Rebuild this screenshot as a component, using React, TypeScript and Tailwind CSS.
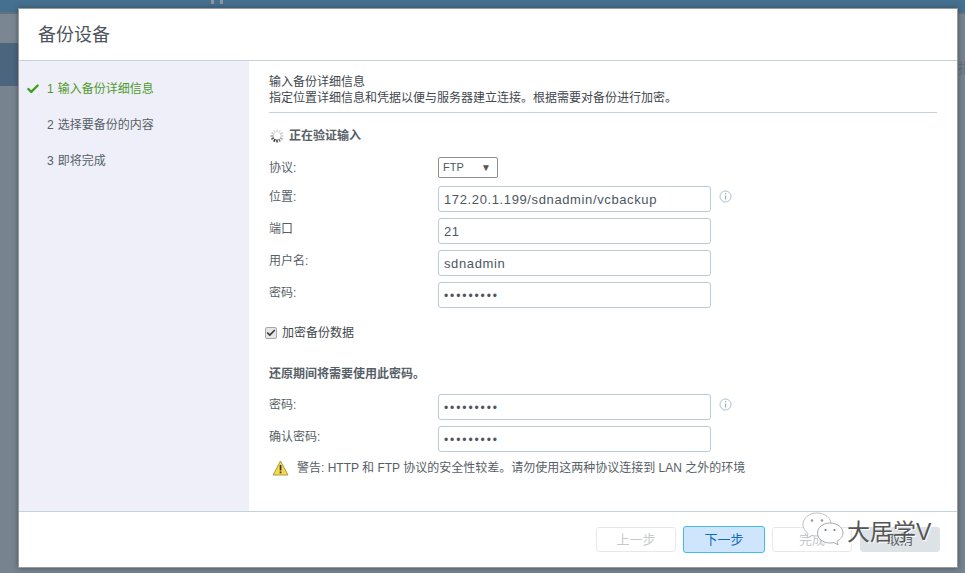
import { Check } from "lucide-react";

const font = { fontFamily: '"Liberation Sans", "Noto Sans CJK SC", sans-serif' };

function Info() {
  return (
    <svg width="13" height="13" viewBox="0 0 13 13" className="ml-[8px] mt-[-6px] shrink-0">
      <circle cx="6.5" cy="6.5" r="5.5" fill="none" stroke="#a9bfd0" />
      <rect x="6" y="5.5" width="1.2" height="4" fill="#9fb3c4" />
      <rect x="6" y="3.2" width="1.2" height="1.2" fill="#9fb3c4" />
    </svg>
  );
}

function Spinner() {
  const ticks = [0, 30, 60, 90, 120, 150, 180, 210, 240, 270, 300, 330];
  const colors = ["#ddd", "#ddd", "#ccc", "#ccc", "#aaa", "#777", "#333", "#222", "#555", "#999", "#ccc", "#ddd"];
  return (
    <svg width="16" height="16" viewBox="0 0 16 16" className="shrink-0">
      {ticks.map((a, i) => (
        <line
          key={a}
          x1="8"
          y1="1.500"
          x2="8"
          y2="4.500"
          stroke={colors[i]}
          strokeWidth="1.500"
          transform={`rotate(${a} 8 8)`}
        />
      ))}
    </svg>
  );
}

function Row({
  label,
  value,
  info,
  dots,
}: {
  label: string;
  value: string;
  info?: boolean;
  dots?: boolean;
}) {
  return (
    <div className="flex h-[32px] items-start">
      <div className="w-[169px] pt-[3px] text-[12px] leading-[16px] text-[#565e66]">{label}</div>
      <div
        className={`flex h-[26px] w-[273px] items-center rounded-[3px] border border-[#b9cbd9] bg-white pl-[5px] pt-[1px] text-[#4c5660] ${
          dots ? "text-[12px] tracking-[1.900px]" : "text-[13px] tracking-[0.620px]"
        }`}
      >
        {value}
      </div>
      {info && (
        <div className="flex h-[26px] items-center">
          <Info />
        </div>
      )}
    </div>
  );
}

function Step({ n, text, done }: { n: number; text: string; done?: boolean }) {
  return (
    <div
      className={`flex h-[36px] items-center text-[12px] ${done ? "text-[#4f9a2c]" : "text-[#565e66]"}`}
    >
      <div className="flex w-[28px] justify-end pr-[7px]">
        {done && <Check size={14} strokeWidth={4} className="text-[#3f9e1e]" />}
      </div>
      <span className="mr-[4px]">{n}</span>
      <span>{text}</span>
    </div>
  );
}

function FooterButton({ children, variant }: { children: string; variant: "off" | "primary" | "gray" }) {
  const cls =
    variant === "primary"
      ? "w-[82px] h-[27px] border-[#3fbdf2] bg-[#cfe5fb] text-[#0f6cb8]"
      : variant === "gray"
        ? "w-[80px] h-[25px] border-[#dde2e7] bg-[#dde2e7] text-[#565e66]"
        : "w-[80px] h-[25px] border-[#e6e9ec] bg-white text-[#c6cacd]";
  return (
    <div className={`flex items-center justify-center rounded-[3px] border text-[13px] ${cls}`}>
      {children}
    </div>
  );
}

function WeChatMark() {
  return (
    <svg width="42" height="34" viewBox="0 0 42 34" className="shrink-0">
      <path
        d="M15 1C7 1 1 6 1 12.500c0 3.700 2 6.800 5 8.900L5 26l5-2.700c1.500.4 3 .7 5 .7 8 0 14-5 14-11.500S23 1 15 1z"
        fill="#fff"
        stroke="#bfc2c5"
      />
      <circle cx="10" cy="8.500" r="1.300" fill="#9a9a9a" />
      <circle cx="20" cy="8.500" r="1.300" fill="#9a9a9a" />
      <path
        d="M28 11c-7 0-12.500 4.300-12.500 10S21 31 28 31c1.300 0 2.600-.2 3.800-.5L36 33l-1-3.800c3.600-1.900 6-4.800 6-8.200 0-5.700-6-10-13-10z"
        fill="#fff"
        stroke="#a8abae"
      />
      <circle cx="23.500" cy="18" r="1.100" fill="#777" />
      <circle cx="32.500" cy="18" r="1.100" fill="#777" />
    </svg>
  );
}

export default function App() {
  return (
    <div className="relative h-[573px] w-[965px] overflow-hidden bg-[#77838f]" style={font}>
      {/* page behind the dialog */}
      <div className="flex h-[12px] gap-[6px] bg-[#45708f] pl-[211px]">
        <div className="h-[4px] w-[3px] bg-[#8c96a1]" />
        <div className="h-[4px] w-[3px] bg-[#8c96a1]" />
      </div>
      <div className="h-[2px] bg-[#5f7284]" />
      <div className="h-[29px] w-[18px] bg-[#7b8693]" />
      <div className="h-[43px] w-[18px] bg-[#4b657f]" />
      <div className="absolute left-[958px] top-[61px] text-[14px] leading-[14px] text-[#5d6d7f]">指</div>

      <div className="absolute left-[18px] top-[8px] flex h-[560px] w-[940px] flex-col border border-[#9a9a9a] bg-white shadow-[0_0_5px_rgba(40,50,60,0.6)]">
        <div className="flex h-[52px] shrink-0 items-center border-b border-[#c3d3d8] pl-[19px] pt-[2px] text-[18px] text-[#4d555c]">
          备份设备
        </div>

        <div className="flex min-h-0 flex-1">
          <div className="w-[230px] shrink-0 bg-[#eeeff8] pt-[10px]">
            <Step n={1} text="输入备份详细信息" done />
            <Step n={2} text="选择要备份的内容" />
            <Step n={3} text="即将完成" />
          </div>

          <div className="flex-1 pl-[20px] pr-[20px] pt-[13px]">
            <div className="text-[12px] leading-[16px] text-[#3f474e]">输入备份详细信息</div>
            <div className="text-[12px] leading-[16px] text-[#3f474e]">
              指定位置详细信息和凭据以便与服务器建立连接。根据需要对备份进行加密。
            </div>
            <div className="mt-[6px] border-t border-[#c3d3d8]" />

            <div className="mt-[15px] flex h-[16px] items-center">
              <Spinner />
              <span className="ml-[4px] text-[12px] font-bold text-[#565e66]">正在验证输入</span>
            </div>

            <div className="mt-[13px] flex h-[29px] items-start">
              <div className="w-[169px] pt-[3px] text-[12px] leading-[16px] text-[#565e66]">协议:</div>
              <div className="flex h-[21px] w-[60px] items-center justify-between rounded-[2px] border border-[#8f8f8f] bg-white pl-[4px] pr-[6px] text-[11px] text-[#4c5660]">
                <span>FTP</span>
                <span className="text-[10px] text-[#555]">▼</span>
              </div>
            </div>

            <Row label="位置:" value="172.20.1.199/sdnadmin/vcbackup" info />
            <Row label="端口" value="21" />
            <Row label="用户名:" value="sdnadmin" />
            <Row label="密码:" value="•••••••••" dots />

            <div className="mt-[11px] flex h-[16px] items-center">
              <div className="ml-[-4px] flex h-[12px] w-[12px] items-center justify-center rounded-[2px] border border-[#a8a8a8] bg-[#e6e6e6]">
                <Check size={10} strokeWidth={4} className="text-[#3a3a3a]" />
              </div>
              <span className="ml-[5px] text-[12px] text-[#3f474e]">加密备份数据</span>
            </div>

            <div className="mt-[25px] h-[16px] text-[12px] font-bold leading-[16px] text-[#565e66]">
              还原期间将需要使用此密码。
            </div>

            <div className="mt-[12px]">
              <Row label="密码:" value="•••••••••" info dots />
              <Row label="确认密码:" value="•••••••••" dots />
            </div>

            <div className="ml-[3px] mt-[-1px] flex h-[22px] items-center">
              <svg width="17" height="16" viewBox="0 0 17 16" className="shrink-0">
                <path d="M8.500 1L16 15H1z" fill="#f5d94a" stroke="#a89a4a" strokeLinejoin="round" />
                <rect x="7.700" y="5" width="1.700" height="5.500" fill="#333" />
                <rect x="7.700" y="11.500" width="1.700" height="1.800" fill="#333" />
              </svg>
              <span className="ml-[8px] text-[12px] text-[#565e66]">
                警告: HTTP 和 FTP 协议的安全性较差。请勿使用这两种协议连接到 LAN 之外的环境
              </span>
            </div>
          </div>
        </div>

        <div className="relative flex h-[56px] shrink-0 items-start justify-end gap-[7px] border-t border-[#c3d3d8] pr-[17px] pt-[14px]">
          <div className="mt-[1px]"><FooterButton variant="off">上一步</FooterButton></div>
          <FooterButton variant="primary">下一步</FooterButton>
          <div className="mt-[1px]"><FooterButton variant="off">完成</FooterButton></div>
          <div className="ml-[1px] mt-[1px]"><FooterButton variant="gray">取消</FooterButton></div>

          {/* 公众号水印 */}
          <div className="absolute left-[783px] top-[0px] flex items-center">
            <WeChatMark />
            <span className="ml-[3px] mt-[5px] text-[23px] leading-[28px] text-[#555] [text-shadow:1px_1px_0_#fff]">大居学V</span>
          </div>
        </div>
      </div>
    </div>
  );
}
